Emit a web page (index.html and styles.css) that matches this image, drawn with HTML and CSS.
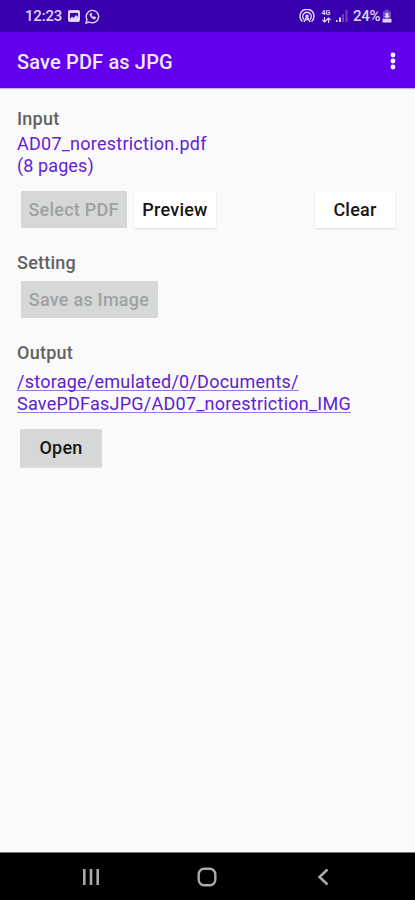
FILE: index.html
```html
<!DOCTYPE html>
<html lang="en">
<head>
<meta charset="utf-8">
<title>Save PDF as JPG</title>
<link rel="stylesheet" href="styles.css">
</head>
<body>
<div class="status">
  <span class="time">12:23</span>
  <svg class="picture" width="12" height="12" viewBox="0 0 12 12"><rect width="12" height="12" rx="2" fill="currentColor"/><path d="M2 9V3h8v4L8 5 5.500 8 4 6.500z" fill="#3a00b0"/></svg>
  <svg class="chat" width="15" height="15" viewBox="0 0 15 15" fill="none" stroke="currentColor" stroke-width="1.400"><path d="M1 14l1-3.500A6.200 6.200 0 1 1 4.500 13z"/><path d="M5 4.500c-1 2 2.500 6 5 5.500l1-1.500-2-1-1 .8L6.500 6.500l.6-1L6.300 4z" fill="currentColor" stroke-width=".5"/></svg>
  <span class="space"></span>
  <svg class="hotspot" width="16" height="14" viewBox="0 0 16 14" fill="none" stroke="currentColor" stroke-width="1.500"><path d="M3.500 12.500a7 7 0 1 1 9 0M5 10.500a4.200 4.200 0 1 1 6 0"/><path d="M8 7.500l-3 5.500M8 7.500l3 5.500M6.500 10.500h3"/><circle cx="8" cy="7.200" r="1" fill="currentColor"/></svg>
  <span class="network"><b>4G</b><svg width="9" height="6" viewBox="0 0 9 6" fill="none" stroke="currentColor" stroke-width="1.200"><path d="M2.500 0v5M.5 3l2 2 2-2M6.500 6V1M4.500 3l2-2 2 2"/></svg></span>
  <svg class="signal" width="12" height="12" viewBox="0 0 12 12" fill="currentColor"><path d="M0 10h1.500v2H0zM3 7.500h2V12H3z"/><path opacity=".3" d="M6 4h2v8H6zM9.500 0h2v12h-2z"/></svg>
  <span class="percent">24%</span>
  <svg class="battery" width="10" height="13" viewBox="0 0 10 13" fill="currentColor"><path opacity=".35" d="M3 0h4v1.500h2V9H1V1.500h2z"/><path d="M3.500 3h3v3h1.500L5 8.500 2 6h1.500zM.5 9h9v3.500h-9z"/></svg>
</div>
<header class="bar">
  <h1>Save PDF as JPG</h1>
  <svg width="6" height="18" viewBox="0 0 6 18" fill="currentColor"><circle cx="3" cy="3" r="2.400"/><circle cx="3" cy="9" r="2.400"/><circle cx="3" cy="15" r="2.400"/></svg>
</header>
<main>
  <section class="input">
    <h2>Input</h2>
    <p><span class="file">AD07_norestriction.pdf</span><br><span class="pages">(8 pages)</span></p>
    <div class="actions">
      <button class="select" disabled>Select PDF</button>
      <button class="light preview">Preview</button>
      <button class="light clear">Clear</button>
    </div>
  </section>
  <section class="setting">
    <h2>Setting</h2>
    <button class="save" disabled>Save as Image</button>
  </section>
  <section class="output">
    <h2>Output</h2>
    <a><span>/storage/emulated/0/Documents/</span><br><span>SavePDFasJPG/AD07_norestriction_IMG</span></a>
    <button class="open">Open</button>
  </section>
</main>
<nav>
  <svg width="18" height="18" viewBox="0 0 18 18" fill="none" stroke="currentColor" stroke-width="2.600"><path d="M2.300 1v16M9 1v16M15.700 1v16"/></svg>
  <svg class="home" width="20" height="20" viewBox="0 0 20 20" fill="none" stroke="currentColor" stroke-width="2.400"><rect x="1.700" y="1.700" width="16.600" height="16.600" rx="5.500"/></svg>
  <svg width="12" height="18" viewBox="0 0 12 18" fill="none" stroke="currentColor" stroke-width="2.500"><path d="M10.500 1.500L2.500 9l8 7.500"/></svg>
</nav>
</body>
</html>
```
FILE: styles.css
```css
* { box-sizing: border-box; }
body {
  margin: 0;
  height: 900px;
  display: flex;
  flex-direction: column;
  overflow: hidden;
  background: #fafafa;
  font-family: Roboto, sans-serif;
}
svg { display: block; flex: none; }
h1, h2, p { margin: 0; }

.status {
  flex: none;
  height: 32px;
  padding: 0 23px 0 25px;
  display: flex;
  align-items: center;
  background: #3a00b0;
  color: #ded6f8;
  font-size: 15px;
  font-weight: 500;
}
.time { width: 37px; letter-spacing: -.2px; }
.picture { margin-left: 6px; }
.chat { margin-left: 5px; }
.space { flex: 1; }
.network {
  width: 12px;
  margin-left: 5px;
  display: flex;
  flex-direction: column;
  align-items: center;
  font-size: 7px;
  line-height: 8px;
}
.signal { margin-left: 4px; }
.percent { margin-left: 5px; width: 28px; font-size: 15px; letter-spacing: -.3px; white-space: nowrap; }
.battery { margin-left: 1px; }

.bar {
  flex: none;
  height: 56px;
  padding: 3px 19px 0 17px;
  display: flex;
  align-items: center;
  justify-content: space-between;
  background: #6200ee;
  color: #f2e9ff;
  box-shadow: 0 1px 1px #c9b5e5;
}
.bar h1 { font-size: 20px; font-weight: 500; letter-spacing: .15px; white-space: nowrap; }
.bar svg { margin-top: -1px; color: #fff; }

main { flex: 1; padding: 20px 20px 0 17px; letter-spacing: .24px; }
h2 { font-size: 18px; line-height: 22px; font-weight: 500; color: #626262; }
p, a {
  display: block;
  font-size: 18px;
  line-height: 22px;
  color: #6422d2;
  white-space: nowrap;
}
p { margin-top: 3px; }
.pages { letter-spacing: .1px; }
a { margin-top: 7px; color: #5e20d0; }
a span {
  text-decoration: underline;
  text-decoration-color: #9a76df;
  text-decoration-thickness: 1px;
  text-decoration-skip-ink: none;
  text-underline-offset: 2px;
}
button {
  display: block;
  height: 37px;
  padding: 0;
  border: 0;
  border-radius: 1px;
  background: #d6d8d7;
  color: #151515;
  font: 500 18px/37px Roboto, sans-serif;
  letter-spacing: .24px;
  white-space: nowrap;
}
button:disabled { color: #a0a2a1; }
.actions { display: flex; margin: 14px 0 0 3.500px; }
.select { width: 106px; }
.light { background: #fff; box-shadow: 0 1px 2px rgba(0, 0, 0, .12); }
.preview { width: 82px; margin-left: 7.500px; }
.clear { width: 80px; margin-left: auto; }
.setting { margin-top: 24px; }
.save { width: 137px; margin: 7px 0 0 3.500px; }
.output { margin-top: 24px; }
.open { width: 82px; height: 38px; line-height: 38px; margin: 14px 0 0 3px; box-shadow: 0 1px 1px #dedede; }

nav {
  flex: none;
  height: 48px;
  padding: 1px 86px 0 82px;
  display: flex;
  align-items: center;
  justify-content: space-between;
  border-top: 1px solid #777;
  background: #000;
  color: #aaa;
}
.home { margin-right: 4px; }
```
